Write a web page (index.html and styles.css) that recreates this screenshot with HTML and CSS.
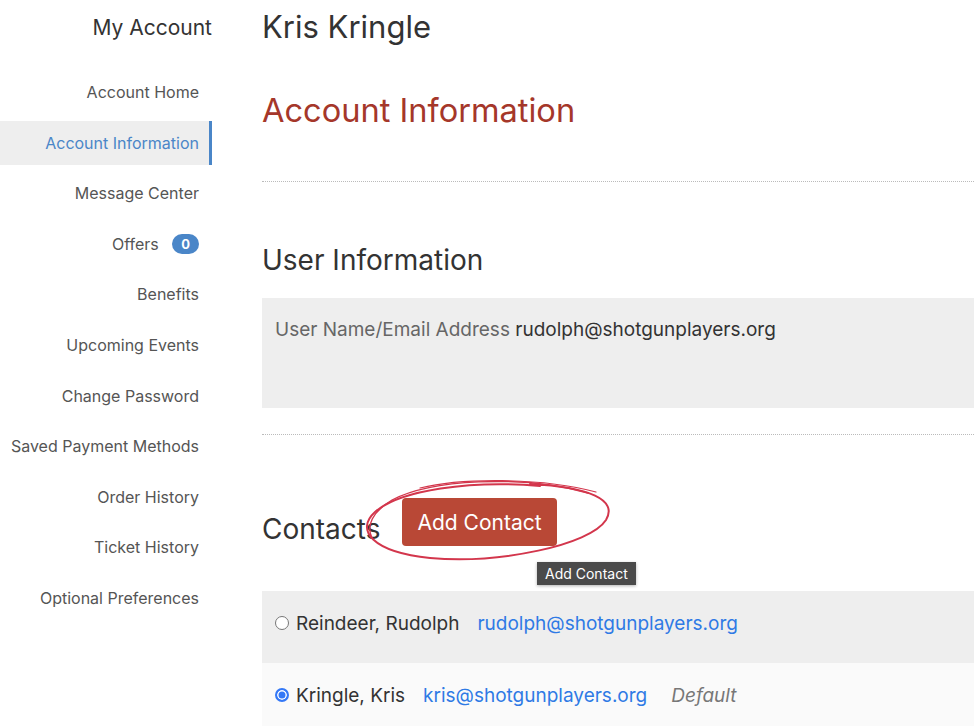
FILE: index.html
```html
<!DOCTYPE html>
<html lang="en">
<head>
    <meta charset="UTF-8">
    <meta name="viewport" content="width=device-width, initial-scale=1.0">
    <title>My Account - Account Information</title>
    <link rel="stylesheet" href="styles.css">
</head>
<body>
    <div class="page">
        <aside class="sidebar">
            <h2 class="sidebar-title">My Account</h2>
            <ul class="side-nav">
                <li><a href="#">Account Home</a></li>
                <li class="active"><a href="#">Account Information</a></li>
                <li><a href="#">Message Center</a></li>
                <li><a href="#">Offers <span class="badge">0</span></a></li>
                <li><a href="#">Benefits</a></li>
                <li><a href="#">Upcoming Events</a></li>
                <li><a href="#">Change Password</a></li>
                <li><a href="#">Saved Payment Methods</a></li>
                <li><a href="#">Order History</a></li>
                <li><a href="#">Ticket History</a></li>
                <li><a href="#">Optional Preferences</a></li>
            </ul>
        </aside>

        <main class="content">
            <h1 class="user-name">Kris Kringle</h1>
            <h2 class="page-title">Account Information</h2>

            <hr class="divider divider-first">

            <h3 class="section-title">User Information</h3>
            <div class="info-box">
                <span class="label">User Name/Email Address</span> rudolph@shotgunplayers.org
            </div>

            <hr class="divider divider-second">

            <div class="contacts-head">
                <h3 class="section-title contacts-title">Contacts</h3>
                <button class="btn-add">Add Contact</button>
                <div class="tooltip">Add Contact</div>
                <svg class="scribble" width="270" height="100" viewBox="350 470 270 100" fill="none" stroke="#d3364c" stroke-linecap="round">
                    <path stroke-width="2" d="M 540 486 C 470 480, 400 490, 375 512 C 355 530, 372 552, 430 558 C 500 564, 590 545, 606 520 C 618 500, 590 487, 530 484"/>
                    <path stroke-width="1.4" d="M 588 493 C 520 474, 430 480, 392 500 C 372 512, 366 526, 372 538"/>
                    <path stroke-width="1.2" d="M 420 488 C 460 478, 540 477, 596 492"/>
                </svg>
            </div>

            <div class="contact-row">
                <label><input type="radio" name="contact"> Reindeer, Rudolph</label>
                <a href="#">rudolph@shotgunplayers.org</a>
            </div>
            <div class="contact-row alt">
                <label><input type="radio" name="contact" checked> Kringle, Kris</label>
                <a href="#">kris@shotgunplayers.org</a>
                <em class="default">Default</em>
            </div>
        </main>
    </div>
</body>
</html>
```

FILE: styles.css
```css
body {
    margin: 0;
    font-family: Inter, "Liberation Sans", Arial, sans-serif;
    color: #333;
    background-color: #fff;
    overflow: hidden;
}
.page {
    display: flex;
    align-items: flex-start;
}
.sidebar {
    width: 212px;
    flex-shrink: 0;
}
.sidebar-title {
    margin: 0;
    padding-top: 13px;
    font-size: 21px;
    line-height: 30px;
    font-weight: normal;
    text-align: right;
    color: #333;
}
.side-nav {
    list-style: none;
    margin: 27px 0 0;
    padding: 0;
}
.side-nav li {
    margin-bottom: 6.6px;
}
.side-nav a {
    display: block;
    height: 44px;
    line-height: 44px;
    padding-right: 10px;
    text-align: right;
    font-size: 16px;
    color: #555;
    text-decoration: none;
    border-right: 3px solid transparent;
}
.side-nav .active a {
    background-color: #eee;
    color: #4a86c8;
    border-right-color: #4a86c8;
}
.badge {
    display: inline-block;
    margin-left: 9px;
    padding: 0 9px;
    height: 20px;
    line-height: 20px;
    border-radius: 10px;
    background-color: #4a86c8;
    color: #fff;
    font-size: 13px;
    font-weight: bold;
    vertical-align: 1px;
}
.content {
    flex: 1;
    margin-left: 50px;
    padding-top: 7px;
    min-width: 0;
}
.user-name {
    margin: 0;
    font-size: 31px;
    line-height: 40px;
    font-weight: normal;
    color: #333;
}
.page-title {
    margin: 43px 0 0;
    font-size: 32.6px;
    line-height: 40px;
    font-weight: normal;
    color: #a5372a;
}
.divider {
    border: none;
    border-top: 1px dotted #bbb;
    margin: 0;
}
.divider-first {
    margin-top: 51px;
}
.divider-second {
    margin-top: 26px;
}
.section-title {
    margin: 61px 0 0;
    font-size: 28px;
    line-height: 34px;
    font-weight: normal;
    color: #333;
}
.info-box {
    margin-top: 21px;
    height: 110px;
    box-sizing: border-box;
    padding: 20px 13px;
    background-color: #eee;
    font-size: 19px;
    line-height: 24px;
    color: #333;
}
.info-box .label {
    color: #666;
}
.contacts-head {
    position: relative;
    display: flex;
    align-items: flex-start;
    gap: 22px;
    margin-top: 63px;
}
.contacts-title {
    margin: 14px 0 0;
}
.btn-add {
    height: 48px;
    padding: 0 15px;
    border: none;
    border-radius: 4px;
    background-color: #b94836;
    color: #fff;
    font-family: inherit;
    font-size: 21px;
    cursor: pointer;
}
.tooltip {
    position: absolute;
    left: 275px;
    top: 64px;
    padding: 0 8px;
    height: 23px;
    line-height: 23px;
    background-color: #4a4a4a;
    color: #fff;
    font-size: 14px;
    box-shadow: 0 1px 3px rgba(0, 0, 0, 0.3);
}
.scribble {
    position: absolute;
    left: 88px;
    top: -28px;
    pointer-events: none;
}
.contact-row {
    display: flex;
    align-items: center;
    height: 72px;
    box-sizing: border-box;
    padding: 0 13px 8px;
    background-color: #eee;
    font-size: 19px;
    gap: 18px;
}
.contacts-head + .contact-row {
    margin-top: 45px;
}
.contact-row.alt {
    background-color: #fafafa;
}
.contact-row label {
    display: flex;
    align-items: center;
    gap: 7px;
    color: #333;
}
.contact-row a {
    color: #2f7ae5;
    text-decoration: none;
}
.contact-row input {
    appearance: none;
    width: 14px;
    height: 14px;
    margin: 0;
    border: 1px solid #777;
    border-radius: 50%;
    background-color: #fff;
}
.contact-row input:checked {
    border: 2px solid #3478f6;
    background-color: #3478f6;
    box-shadow: inset 0 0 0 1.5px #fff;
}
.default {
    margin-left: 6px;
    color: #777;
}
```
